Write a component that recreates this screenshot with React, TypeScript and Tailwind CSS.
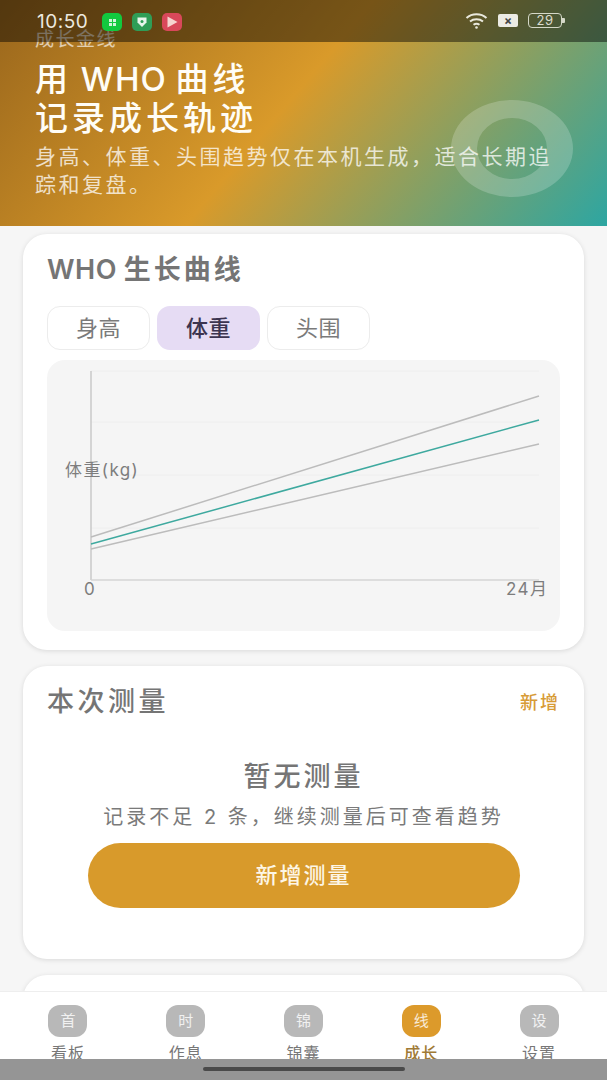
const font = "font-['Inter','Noto_Sans_CJK_SC',sans-serif]"

const navItems = [
  { icon: '首', label: '看板' },
  { icon: '时', label: '作息' },
  { icon: '锦', label: '锦囊' },
  { icon: '线', label: '成长', active: true },
  { icon: '设', label: '设置' },
]

const StatusBar = () => (
  <div className="absolute inset-x-0 top-0 z-10 flex h-[42px] items-start justify-between bg-black/45 pl-[37px] pr-[42px] pt-[12px]">
    <div className="flex items-center">
      <span className="w-[53px] text-[19px] leading-[20px] tracking-[0.5px] text-[#ece8df]">10:50</span>
      <div className="ml-[12px] flex gap-[10px]">
        <div className="flex h-[18px] w-[20px] items-center justify-center rounded-[5px] bg-[#12c93f]">
          <div className="grid grid-cols-2 gap-[1px]">
            <i className="h-[3px] w-[3px] bg-white/80" />
            <i className="h-[3px] w-[3px] bg-white/80" />
            <i className="h-[3px] w-[3px] bg-white/80" />
            <i className="h-[3px] w-[3px] bg-white/80" />
          </div>
        </div>
        <div className="flex h-[18px] w-[20px] items-center justify-center rounded-[5px] bg-[#2f9d57]">
          <svg width="12" height="12" viewBox="0 0 12 12">
            <path d="M1.5 1.5h9v5L6 11 1.5 6.500z" fill="#e8f5ec" />
            <circle cx="6" cy="5.500" r="1.500" fill="#2f9d57" />
          </svg>
        </div>
        <div className="flex h-[18px] w-[20px] items-center justify-center rounded-[5px] bg-[#d9485a]">
          <svg width="12" height="12" viewBox="0 0 12 12">
            <path d="M1.500 0.500 11.500 6 1.500 11.500z" fill="#f6d4d0" />
          </svg>
        </div>
      </div>
    </div>
    <div className="flex items-center">
      <svg width="23" height="17" viewBox="0 0 22 17" fill="none" stroke="#e9e8dc" strokeWidth="2">
        <path d="M1 6c5.500-5 14.500-5 20 0" />
        <path d="M4.500 9.500c3.500-3 9.500-3 13 0" />
        <path d="M8 12.800c1.800-1.300 4.200-1.300 6 0" />
        <circle cx="11" cy="15.500" r="1.300" fill="#e9e8dc" stroke="none" />
      </svg>
      <div className="ml-[10px] flex h-[13px] w-[20px] items-center justify-center rounded-[2px] bg-[#ecebe4] text-[12px] font-bold leading-none text-[#444]">×</div>
      <div className="ml-[10px] flex items-center">
        <div className="flex h-[15px] w-[34px] items-center justify-center rounded-[4px] border border-[#d5d8c8] text-[13px] leading-none tracking-[0.5px] text-[#dcdccf]">29</div>
        <div className="h-[5px] w-[3px] rounded-r-[1px] bg-[#d5d8c8]" />
      </div>
    </div>
  </div>
)

const Hero = () => (
  <section className="relative h-[226px] overflow-hidden bg-[linear-gradient(130deg,#99661c_0%,#d99a2a_47%,#2da6a2_100%)] pl-[35px] pt-[29px]">
    <p className="text-[19px] leading-[22px] tracking-[1.500px] text-white/65">成长金线</p>
    <h1 className="mt-[9px] text-[33px] font-medium leading-[39px] tracking-[4px] text-[#fffdf6] [word-spacing:-4px]">
      用 <span className="tracking-[1px]">WHO</span> 曲线
      <br />
      记录成长轨迹
    </h1>
    <p className="mt-[5px] w-[530px] text-[21px] leading-[28px] tracking-[2.500px] text-white/75">
      身高、体重、头围趋势仅在本机生成，适合长期追踪和复盘。
    </p>
    <div className="absolute left-[451px] top-[100px] h-[97px] w-[122px] rounded-[50%] border-x-[26px] border-y-[18px] border-white/20" />
  </section>
)

const Tab = ({ label, active }: { label: string; active?: boolean }) => (
  <div
    className={
      active
        ? 'flex h-[44px] w-[103px] items-center justify-center rounded-[13px] bg-[#e6dcf4] text-[22px] font-medium tracking-[0.500px] text-[#3c3450]'
        : 'flex h-[44px] w-[103px] items-center justify-center rounded-[13px] border border-[#ececec] bg-white text-[22px] tracking-[0.500px] text-[#7a7a7a]'
    }
  >
    {label}
  </div>
)

const Chart = () => (
  <div className="mt-[10px] h-[271px] rounded-[18px] bg-[#f5f5f5]">
    <svg width="513" height="271" viewBox="0 0 513 271">
      <g stroke="#eeeeee" strokeWidth="1">
        <line x1="44" y1="11" x2="492" y2="11" />
        <line x1="44" y1="62" x2="492" y2="62" />
        <line x1="44" y1="115" x2="492" y2="115" />
        <line x1="44" y1="168" x2="492" y2="168" />
      </g>
      <line x1="44" y1="11" x2="44" y2="220" stroke="#c8c8c8" strokeWidth="1.500" />
      <line x1="44" y1="220" x2="492" y2="220" stroke="#d4d4d4" strokeWidth="1.500" />
      <line x1="44" y1="177" x2="492" y2="36" stroke="#bcbcbc" strokeWidth="1.500" />
      <line x1="44" y1="189" x2="492" y2="84" stroke="#bcbcbc" strokeWidth="1.500" />
      <line x1="44" y1="184" x2="492" y2="60" stroke="#3ea99f" strokeWidth="1.500" />
      <g fill="#7d7d7d" fontSize="17" letterSpacing="1.400">
        <text x="18" y="116">体重(kg)</text>
        <text x="37" y="235">0</text>
        <text x="459" y="235">24月</text>
      </g>
    </svg>
  </div>
)

const BottomNav = () => (
  <nav className="absolute inset-x-0 top-[991px] flex h-[69px] overflow-hidden border-t border-[#eeeeee] bg-white px-[9px] pt-[13px]">
    {navItems.map((item) => (
      <div key={item.label} className="flex flex-1 flex-col items-center">
        <div
          className={
            item.active
              ? 'flex h-[32px] w-[39px] shrink-0 items-center justify-center rounded-[12px] bg-[#dc9a2b] text-[15px] text-white/80'
              : 'flex h-[32px] w-[39px] shrink-0 items-center justify-center rounded-[12px] bg-[#b8b8b8] text-[15px] text-white/80'
          }
        >
          {item.icon}
        </div>
        <span
          className={
            item.active
              ? 'mt-[5px] shrink-0 text-[16px] leading-[22px] tracking-[1px] font-medium text-[#a07a36]'
              : 'mt-[5px] shrink-0 text-[16px] leading-[22px] tracking-[1px] text-[#777777]'
          }
        >
          {item.label}
        </span>
      </div>
    ))}
  </nav>
)

const App = () => (
  <div className={`relative h-[1080px] w-[607px] overflow-hidden bg-[#f6f6f6] ${font}`}>
    <StatusBar />
    <Hero />
    <main className="flex flex-col gap-[16px] px-[23px] pt-[8px]">
      <section className="h-[416px] rounded-[24px] bg-white px-[24px] pt-[18px] shadow-[0_1px_5px_rgba(0,0,0,0.12)]">
        <h2 className="text-[27px] font-semibold leading-[36px] tracking-[3px] text-[#757575] [word-spacing:-3px]">
          <span className="tracking-[0.500px]">WHO</span> 生长曲线
        </h2>
        <div className="mt-[18px] flex gap-[7px]">
          <Tab label="身高" />
          <Tab label="体重" active />
          <Tab label="头围" />
        </div>
        <Chart />
      </section>
      <section className="h-[293px] rounded-[24px] bg-white px-[24px] pt-[18px] shadow-[0_1px_5px_rgba(0,0,0,0.12)]">
        <div className="flex items-center justify-between">
          <h2 className="text-[27px] font-medium leading-[36px] tracking-[3.500px] text-[#757575]">本次测量</h2>
          <span className="text-[18px] font-medium tracking-[2px] text-[#d79b36]">新增</span>
        </div>
        <div className="flex flex-col items-center">
          <p className="mt-[39px] text-[27px] font-medium leading-[36px] tracking-[3px] text-[#757575]">暂无测量</p>
          <p className="mt-[8px] text-[20px] leading-[28px] tracking-[3px] text-[#7a7a7a]">记录不足 2 条，继续测量后可查看趋势</p>
          <div className="mt-[12px] flex h-[65px] w-[432px] items-center justify-center rounded-full bg-[#d89a2b] text-[22px] font-medium tracking-[2px] text-[#fdf6e6]">
            新增测量
          </div>
        </div>
      </section>
      <section className="h-[100px] rounded-[24px] bg-white shadow-[0_1px_5px_rgba(0,0,0,0.12)]" />
    </main>
    <BottomNav />
    <div className="absolute inset-x-0 bottom-0 z-10 flex h-[21px] justify-center bg-[#959595] pt-[8px]">
      <div className="h-[4px] w-[202px] rounded-full bg-[#4a4a4a]" />
    </div>
  </div>
)

export default App
